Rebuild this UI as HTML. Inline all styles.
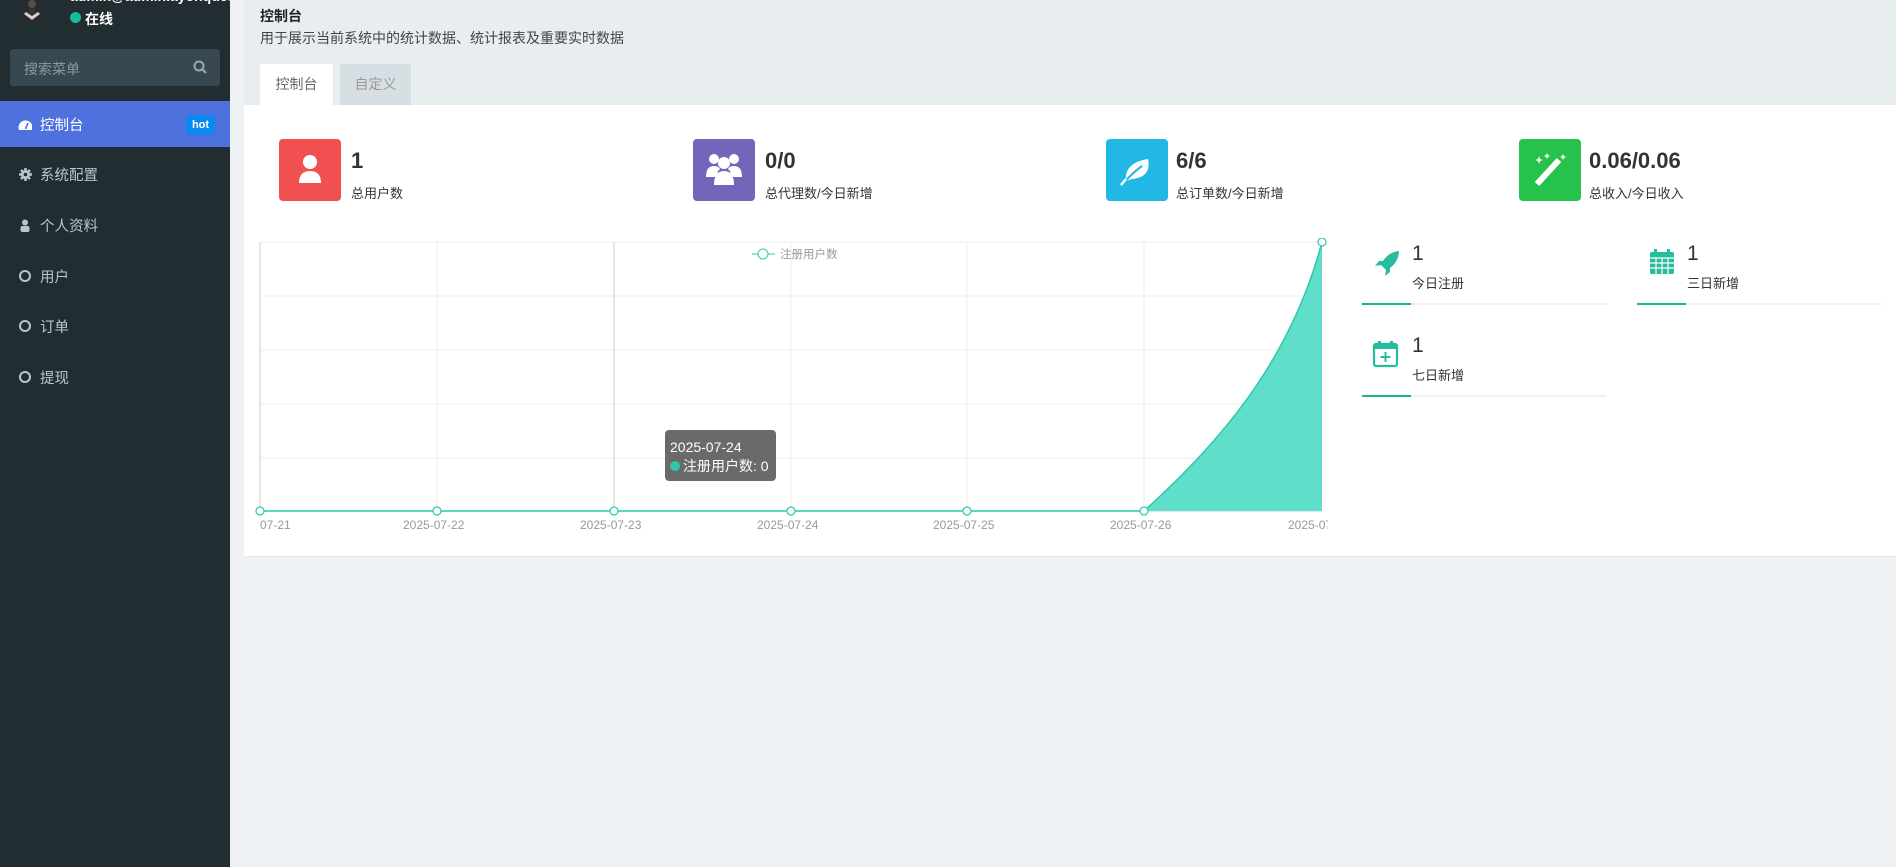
<!DOCTYPE html>
<html><head><meta charset="utf-8"><style>
*{margin:0;padding:0;box-sizing:border-box}
body{width:1896px;height:867px;overflow:hidden;background:#eef2f5;font-family:"Liberation Sans","Noto Sans CJK SC",sans-serif;position:relative;color:#333}
.a{position:absolute}
.side{left:0;top:0;width:230px;height:867px;background:#222d32}
.mi{left:0;width:230px;height:46px;color:#b8c7ce;font-size:14.5px;display:flex;align-items:center;padding-left:18px}
.mi .ic{width:14px;margin-right:8px;display:inline-flex;align-items:center;justify-content:center}
.circ{width:12px;height:12px;border:2px solid #b8c7ce;border-radius:50%}
.num{font-size:22px;font-weight:bold;color:#333}
.lbl{font-size:13px;color:#333}
.xl{font-size:12px;color:#999;top:518px}
</style></head><body>
<div class="a side"></div>
<div class="a" style="left:22px;top:0;width:20px;height:22px;">
<svg width="20" height="22"><circle cx="10" cy="4" r="4" fill="#5a4a44"/><path d="M2 14 L10 20 L18 14 L16 12 L10 16 L4 12Z" fill="#e8c8c0"/><rect x="7" y="8" width="6" height="6" fill="#333"/></svg></div>
<div class="a" style="left:70px;top:-12px;color:#fff;font-size:14px;font-weight:bold;width:160px;overflow:hidden;white-space:nowrap">admin@admin.ayonquest.com</div>
<div class="a" style="left:70px;top:12px;width:11px;height:11px;border-radius:50%;background:#18bc9c"></div>
<div class="a" style="left:85px;top:9px;color:#fff;font-size:14px;font-weight:bold">在线</div>
<div class="a" style="left:10px;top:49px;width:210px;height:37px;background:#374850;border-radius:3px"></div>
<div class="a" style="left:24px;top:59px;color:#8a9aa2;font-size:14px">搜索菜单</div>
<svg class="a" style="left:193px;top:60px" width="14" height="14"><circle cx="6" cy="6" r="4.5" stroke="#9aa8ae" stroke-width="2" fill="none"/><path d="M9.5 9.5 L13 13" stroke="#9aa8ae" stroke-width="2.2"/></svg>
<div class="a mi" style="top:101px;background:#4e71dd;color:#fff"><span class="ic"><svg width="15" height="13"><path d="M1 12 A7 7 0 1 1 14 12Z" fill="#fff"/><path d="M7.5 11 L10 5" stroke="#4e71dd" stroke-width="1.6"/></svg></span>控制台</div>
<div class="a" style="left:186px;top:115px;width:29px;height:20px;background:#0a8af0;border-radius:3px;color:#fff;font-size:11px;font-weight:bold;text-align:center;line-height:20px">hot</div>
<div class="a mi" style="top:151px"><span class="ic"><svg width="13" height="13"><circle cx="6.5" cy="6.5" r="4.5" fill="#b8c7ce"/><circle cx="6.5" cy="6.5" r="1.8" fill="#222d32"/><g stroke="#b8c7ce" stroke-width="2.5"><line x1="6.5" y1="0" x2="6.5" y2="13"/><line x1="0" y1="6.5" x2="13" y2="6.5"/><line x1="2" y1="2" x2="11" y2="11"/><line x1="11" y1="2" x2="2" y2="11"/></g><circle cx="6.5" cy="6.5" r="1.8" fill="#222d32"/></svg></span>系统配置</div>
<div class="a mi" style="top:202px"><span class="ic"><svg width="10" height="13"><circle cx="5" cy="3.5" r="3" fill="#b8c7ce"/><rect x="0.5" y="7" width="9" height="6" rx="2" fill="#b8c7ce"/></svg></span>个人资料</div>
<div class="a mi" style="top:253px"><span class="ic"><span class="circ"></span></span>用户</div>
<div class="a mi" style="top:303px"><span class="ic"><span class="circ"></span></span>订单</div>
<div class="a mi" style="top:354px"><span class="ic"><span class="circ"></span></span>提现</div>

<div class="a" style="left:244px;top:0;width:1652px;height:105px;background:#e8edf0"></div>
<div class="a" style="left:260px;top:6px;font-size:14px;font-weight:bold;color:#222">控制台</div>
<div class="a" style="left:260px;top:28px;font-size:14px;color:#444">用于展示当前系统中的统计数据、统计报表及重要实时数据</div>
<div class="a" style="left:260px;top:64px;width:73px;height:41px;background:#fff;color:#666;font-size:14px;text-align:center;line-height:40px">控制台</div>
<div class="a" style="left:340px;top:64px;width:71px;height:41px;background:#d8dfe4;color:#999;font-size:14px;text-align:center;line-height:40px">自定义</div>
<div class="a" style="left:244px;top:105px;width:1652px;height:452px;background:#fff;border-bottom:1px solid #e4e8ea"></div>

<div class="a" style="left:279px;top:139px;width:62px;height:62px;border-radius:4px;background:#f05050"><svg width="62" height="62"><circle cx="31" cy="23" r="7" fill="#fff"/><path d="M20 44 Q20 32 31 32 Q42 32 42 44Z" fill="#fff"/></svg></div>
<div class="a num" style="left:351px;top:148px">1</div><div class="a lbl" style="left:351px;top:183px">总用户数</div>
<div class="a" style="left:693px;top:139px;width:62px;height:62px;border-radius:4px;background:#7266ba"><svg width="62" height="62" fill="#fff"><circle cx="21" cy="20" r="5"/><circle cx="41" cy="20" r="5"/><circle cx="31" cy="24" r="6"/><path d="M13 38 Q13 27 21 27 Q26 27 27 30 Q24 32 24 38Z"/><path d="M49 38 Q49 27 41 27 Q36 27 35 30 Q38 32 38 38Z"/><path d="M21 46 Q21 32 31 32 Q41 32 41 46Z"/></svg></div>
<div class="a num" style="left:765px;top:148px">0/0</div><div class="a lbl" style="left:765px;top:183px">总代理数/今日新增</div>
<div class="a" style="left:1106px;top:139px;width:62px;height:62px;border-radius:4px;background:#23b7e5"><svg width="62" height="62"><path d="M20 42 Q18 24 42 20 Q46 38 26 40Z" fill="#fff"/><path d="M16 46 Q26 34 36 27" stroke="#23b7e5" stroke-width="2" fill="none"/><path d="M15 46 L20 40" stroke="#fff" stroke-width="2.5"/></svg></div>
<div class="a num" style="left:1176px;top:148px">6/6</div><div class="a lbl" style="left:1176px;top:183px">总订单数/今日新增</div>
<div class="a" style="left:1519px;top:139px;width:62px;height:62px;border-radius:4px;background:#27c24c"><svg width="62" height="62"><path d="M18 45 L40 21" stroke="#fff" stroke-width="6"/><path d="M20 17 l1 3 3 1 -3 1 -1 3 -1 -3 -3 -1 3 -1z M44 15 l1 2 2 1 -2 1 -1 2 -1 -2 -2 -1 2 -1z M28 14 l1 2 2 1 -2 1 -1 2 -1 -2 -2 -1 2 -1z" fill="#fff"/></svg></div>
<div class="a num" style="left:1589px;top:148px">0.06/0.06</div><div class="a lbl" style="left:1589px;top:183px">总收入/今日收入</div>

<svg class="a" style="left:255px;top:238px" width="1080" height="280">
<g transform="translate(5,4)">
<g stroke="#eee" stroke-width="1">
<line x1="0" y1="0" x2="1062" y2="0"/><line x1="0" y1="54" x2="1062" y2="54"/><line x1="0" y1="108" x2="1062" y2="108"/><line x1="0" y1="162" x2="1062" y2="162"/><line x1="0" y1="216" x2="1062" y2="216"/>
<line x1="177" y1="0" x2="177" y2="269"/><line x1="531" y1="0" x2="531" y2="269"/><line x1="707" y1="0" x2="707" y2="269"/><line x1="884" y1="0" x2="884" y2="269"/>
</g>
<line x1="0" y1="0" x2="0" y2="269" stroke="#ccc"/>
<line x1="354" y1="0" x2="354" y2="269" stroke="#ccc"/>
<line x1="0" y1="269" x2="1062" y2="269" stroke="#ccc"/>
<path d="M884 269 C960 200 1030 120 1062 0 L1062 269Z" fill="#5fdfca"/>
<path d="M0 269 L884 269 C960 200 1030 120 1062 0" stroke="#2dc9a9" stroke-width="1.5" fill="none"/>
<g fill="#fff" stroke="#2dc9a9" stroke-width="1.2"><circle cx="0" cy="269" r="4"/><circle cx="177" cy="269" r="4"/><circle cx="354" cy="269" r="4"/><circle cx="531" cy="269" r="4"/><circle cx="707" cy="269" r="4"/><circle cx="884" cy="269" r="4"/><circle cx="1062" cy="0" r="4"/></g>
<line x1="492" y1="12" x2="515" y2="12" stroke="#2dc9a9"/><circle cx="503" cy="12" r="5" fill="#fff" stroke="#2dc9a9"/>
<text x="520" y="16" font-size="11.5" fill="#999" font-family="Liberation Sans,Noto Sans CJK SC,sans-serif">注册用户数</text>
</g></svg>
<div class="a xl" style="left:260px">07-21</div>
<div class="a xl" style="left:403px">2025-07-22</div>
<div class="a xl" style="left:580px">2025-07-23</div>
<div class="a xl" style="left:757px">2025-07-24</div>
<div class="a xl" style="left:933px">2025-07-25</div>
<div class="a xl" style="left:1110px">2025-07-26</div>
<div class="a xl" style="left:1288px;width:40px;overflow:hidden;white-space:nowrap">2025-07-27</div>
<div class="a" style="left:665px;top:430px;width:111px;height:51px;background:rgba(80,80,80,.85);border-radius:4px;color:#fff;font-size:14px;padding:8px 5px;line-height:19px">2025-07-24<br><span style="display:inline-block;width:10px;height:10px;border-radius:50%;background:#2dc9a9;margin-right:3px"></span>注册用户数: 0</div>

<svg class="a" style="left:1373px;top:249px" width="30" height="30"><path d="M26 2 Q16 3 10 12 L6 12 L2 17 L8 16 L13 21 L12 27 L17 23 L17 19 Q26 12 26 2Z" fill="#26bd9c"/></svg>
<div class="a" style="left:1412px;top:242px;font-size:21px;color:#333">1</div>
<div class="a" style="left:1412px;top:273px;font-size:13px;color:#333">今日注册</div>
<div class="a" style="left:1362px;top:303px;width:244px;height:2px;background:#f1f1f1"></div><div class="a" style="left:1362px;top:303px;width:49px;height:2px;background:#1ab394"></div>
<svg class="a" style="left:1648px;top:248px" width="28" height="28"><rect x="2" y="4" width="24" height="22" rx="2" fill="#26bd9c"/><g stroke="#fff" stroke-width="1.2"><line x1="2" y1="10" x2="26" y2="10"/><line x1="2" y1="15" x2="26" y2="15"/><line x1="2" y1="20" x2="26" y2="20"/><line x1="8" y1="10" x2="8" y2="26"/><line x1="14" y1="10" x2="14" y2="26"/><line x1="20" y1="10" x2="20" y2="26"/></g><rect x="6" y="1" width="3" height="6" fill="#26bd9c"/><rect x="19" y="1" width="3" height="6" fill="#26bd9c"/></svg>
<div class="a" style="left:1687px;top:242px;font-size:21px;color:#333">1</div>
<div class="a" style="left:1687px;top:273px;font-size:13px;color:#333">三日新增</div>
<div class="a" style="left:1637px;top:303px;width:245px;height:2px;background:#f1f1f1"></div><div class="a" style="left:1637px;top:303px;width:49px;height:2px;background:#1ab394"></div>
<svg class="a" style="left:1372px;top:340px" width="28" height="28"><rect x="2" y="4" width="23" height="22" rx="2" fill="#fff" stroke="#26bd9c" stroke-width="2.2"/><rect x="2" y="4" width="23" height="5" fill="#26bd9c"/><rect x="6" y="1" width="3" height="6" fill="#26bd9c"/><rect x="18" y="1" width="3" height="6" fill="#26bd9c"/><path d="M13.5 12 V22 M8.5 17 H18.5" stroke="#26bd9c" stroke-width="2"/></svg>
<div class="a" style="left:1412px;top:334px;font-size:21px;color:#333">1</div>
<div class="a" style="left:1412px;top:365px;font-size:13px;color:#333">七日新增</div>
<div class="a" style="left:1362px;top:395px;width:244px;height:2px;background:#f1f1f1"></div><div class="a" style="left:1362px;top:395px;width:49px;height:2px;background:#1ab394"></div>
</body></html>
